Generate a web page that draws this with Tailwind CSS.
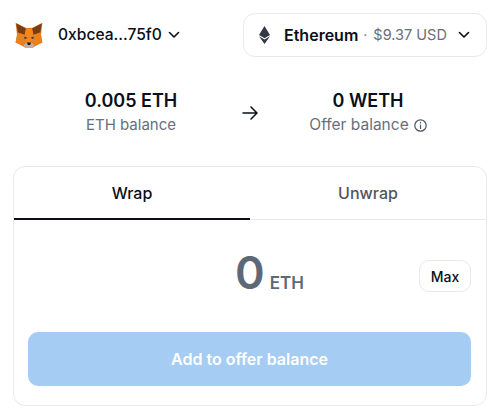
<!DOCTYPE html>
<html lang="en">
<head>
    <meta charset="UTF-8">
    <title>Wrap ETH</title>
    <script src="https://cdn.jsdelivr.net/npm/@tailwindcss/browser@4"></script>
</head>
<body class="bg-white font-['Inter',sans-serif] text-[#0a0f19] w-[500px] h-[416px] overflow-hidden">
    <div class="pl-[15px] pr-[13px] pt-[13px] flex justify-between items-center h-[57px]">
        <button class="flex items-center">
            <svg class="w-[28px] h-[26px]" viewBox="0 0 28 26">
                <path fill="#e2761b" d="M0.600 0.800 11 6h6L27.400 0.800 26 12.500l1.400 8-7 3.500-2.400 1.500h-8L7.600 24l-7-3.500 1.400-8z"/>
                <path fill="#763d16" d="M1.300 1.500 11 6.500 9.800 13 2.800 10.500z"/>
                <path fill="#763d16" d="M26.700 1.500 17 6.500l1.200 6.500 7-2.500z"/>
                <path fill="#f6851b" d="M11 6.500h6l1.500 6.500-2.500 7h-4l-2.500-7z"/>
                <path fill="#e8821e" d="M2.800 10.500 9.800 13 12 20l-6 2.500-5.400-2z"/>
                <path fill="#e8821e" d="M25.200 10.500 18.200 13 16 20l6 2.500 5.400-2z"/>
                <path fill="#233447" d="M9.500 14.500 12.500 16 9.500 17z"/>
                <path fill="#233447" d="M18.500 14.500 15.500 16 18.500 17z"/>
                <path fill="#c0ad9e" d="M8.500 22.500 12 20.500h4l3.500 2-1.500 3.500h-8z"/>
                <path fill="#161616" d="M12 20.500h4l-.8 2.500h-2.400z"/>
            </svg>
            <span class="ml-[15px] text-[15.600px] leading-none font-medium">0xbcea...75f0</span>
            <svg class="ml-[6px] w-[12px] h-[8px]" viewBox="0 0 12 8" fill="none" stroke="#0a0f19" stroke-width="1.600" stroke-linecap="round" stroke-linejoin="round"><path d="M1.500 1.500 6 6l4.500-4.500"/></svg>
        </button>
        <button class="w-[244px] h-[44px] border-[1.500px] border-[#e8e9eb] rounded-[12px] flex items-center pl-[15px] pr-[16px]">
            <svg class="w-[11px] h-[18px] shrink-0" viewBox="0 0 11 18">
                <path fill="#343a43" d="M5.500 0 0 9l5.500 3.200L11 9z"/>
                <path fill="#343a43" d="M0 10.300 5.500 18 11 10.300 5.500 13.500z"/>
            </svg>
            <span class="ml-[14px] text-[16px] leading-none font-semibold">Ethereum</span>
            <span class="ml-[5px] text-[14px] leading-none text-[#67707b]">·</span>
            <span class="ml-[6px] text-[14.500px] leading-none text-[#67707b]">$9.37 USD</span>
            <svg class="ml-auto w-[12px] h-[8px]" viewBox="0 0 12 8" fill="none" stroke="#0a0f19" stroke-width="1.600" stroke-linecap="round" stroke-linejoin="round"><path d="M1.500 1.500 6 6l4.500-4.500"/></svg>
        </button>
    </div>

    <div class="mt-[32px] flex items-start h-[47px]">
        <div class="w-[236px] pl-[26px] text-center">
            <p class="text-[18px] leading-[24px] font-semibold">0.005 ETH</p>
            <p class="mt-[2px] text-[15px] leading-[20px] text-[#67707b]">ETH balance</p>
        </div>
        <div class="w-[28px] h-[47px] flex items-center justify-center">
            <svg class="w-[16px] h-[14px]" viewBox="0 0 16 14" fill="none" stroke="#0a0f19" stroke-width="1.500" stroke-linecap="round" stroke-linejoin="round"><path d="M1 7h14M9 1l6 6-6 6"/></svg>
        </div>
        <div class="w-[236px] pr-[28px] text-center">
            <p class="text-[18px] leading-[24px] font-semibold">0 WETH</p>
            <p class="mt-[2px] text-[15.500px] leading-[20px] text-[#67707b] flex items-center justify-center gap-[5px]">
                Offer balance
                <svg class="w-[13px] h-[13px]" viewBox="0 0 13 13" fill="none" stroke="#4d5661" stroke-width="1.200"><circle cx="6.500" cy="6.500" r="5.700"/><path d="M6.500 6v3.500" stroke-linecap="round"/><path d="M6.500 3.400v.6" stroke-linecap="round"/></svg>
            </p>
        </div>
    </div>

    <div class="mt-[30px] mx-[13px] w-[474px] h-[240px] border-[1.500px] border-[#e8e9eb] rounded-[12px] overflow-hidden">
        <div class="flex h-[53px] border-b-[1.500px] border-[#e8e9eb]">
            <div class="w-1/2 h-[53px] border-b-2 border-[#0a0f19] flex items-center justify-center text-[16px] font-medium">Wrap</div>
            <div class="w-1/2 flex items-center justify-center text-[16px] font-medium text-[#4d5661]">Unwrap</div>
        </div>
        <div class="relative h-[112px] flex items-center justify-center pl-[39px]">
            <div class="flex items-baseline gap-[5px] -mt-[8px]">
                <span class="text-[45px] leading-none font-semibold text-[#5f6975]">0</span>
                <span class="text-[17px] leading-none font-semibold text-[#5f6975]">ETH</span>
            </div>
            <button class="absolute right-[15px] top-[40px] w-[52px] h-[32px] border-[1.500px] border-[#e8e9eb] rounded-[10px] text-[14px] font-medium">Max</button>
        </div>
        <div class="pl-[14px] pr-[15px]">
            <button class="w-full h-[54px] bg-[#a5ccf3] rounded-[10px] text-white text-[16px] font-semibold">Add to offer balance</button>
        </div>
    </div>
</body>
</html>
